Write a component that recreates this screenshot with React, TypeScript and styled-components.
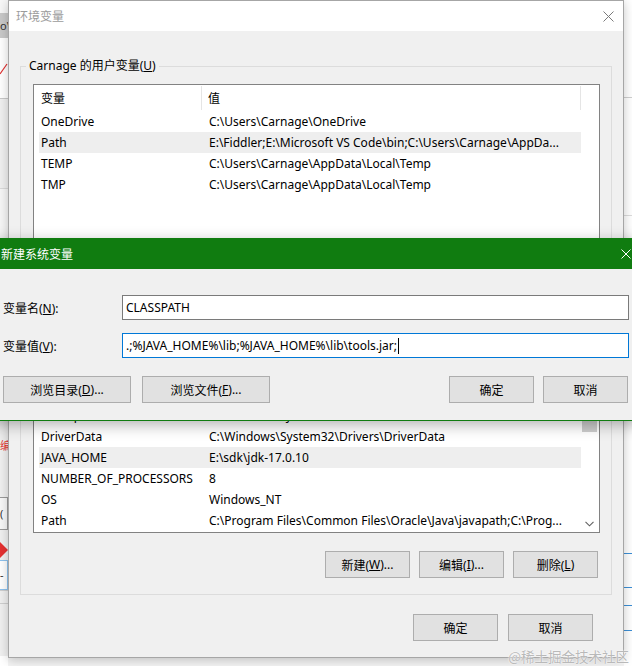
import React from "react";
import styled, { createGlobalStyle } from "styled-components";

const FONT = `"Noto Sans", "Noto Sans CJK SC", sans-serif`;

const Global = createGlobalStyle`
  html, body { margin: 0; padding: 0; }
  body { width: 632px; height: 666px; overflow: hidden; background: #fff; font-family: ${FONT}; font-size: 12px; }
  * { box-sizing: border-box; }
`;

const Desktop = styled.div`
  position: relative;
  width: 632px;
  height: 666px;
  overflow: hidden;
  background: #f4f4f4;
  font-family: ${FONT};
  font-size: 12px;
  color: #000;
`;

/* ---------- background fragments of other windows ---------- */
const Strip = styled.div<{ $left: number }>`
  position: absolute;
  top: 0;
  left: ${(p) => p.$left}px;
  width: 8px;
  height: 666px;
  display: flex;
  flex-direction: column;
  overflow: hidden;
  background: #fff;
`;
const Seg = styled.div<{ $h: number; $bg?: string; $line?: string; $color?: string; $box?: string }>`
  flex: 0 0 ${(p) => p.$h}px;
  background: ${(p) => p.$bg ?? "transparent"};
  ${(p) => (p.$line ? `border-top: 1px solid ${p.$line};` : "")}
  ${(p) => (p.$box ? `border: 1px solid ${p.$box}; border-left: none;` : "")}
  color: ${(p) => p.$color ?? "#333"};
  font-size: 11px;
  line-height: ${(p) => p.$h}px;
  overflow: hidden;
  white-space: nowrap;
  display: flex;
  align-items: center;
`;

/* ---------- window chrome ---------- */
const EnvWindow = styled.section`
  position: absolute;
  left: 8px;
  top: 0;
  width: 616px;
  height: 658px;
  display: flex;
  flex-direction: column;
  background: #f0f0f0;
  border: 1px solid #a6a6a6;
  box-shadow: 0 2px 10px rgba(0, 0, 0, 0.22);
`;
const TitleBar = styled.header<{ $active?: boolean }>`
  flex: 0 0 30px;
  display: flex;
  align-items: center;
  justify-content: space-between;
  padding: ${(p) => (p.$active ? "0 10px 0 10px" : "0 9px 0 7px")};
  background: ${(p) => (p.$active ? "#107c10" : "#ffffff")};
  color: ${(p) => (p.$active ? "#ffffff" : "#9b9b9b")};
  font-size: 12px;
`;
const WinBody = styled.div`
  flex: 1;
  min-height: 0;
  display: flex;
  flex-direction: column;
  padding: 27px 11px 16px 11px;
`;
const Group = styled.fieldset<{ $h?: number }>`
  margin: 0;
  padding: 10px 11px 16px 12px;
  border: 1px solid #dcdcdc;
  min-width: 0;
  display: flex;
  flex-direction: column;
  ${(p) => (p.$h ? `flex: 0 0 ${p.$h}px;` : "flex: 1 1 auto; min-height: 0;")}
  & + & {
    margin-top: 8px;
  }
`;
const Legend = styled.legend`
  margin-left: -7px;
  padding: 0 3px;
  line-height: 16px;
  font-size: 12px;
`;
const Key = styled.span`
  text-decoration: underline;
  text-underline-offset: 1px;
`;

/* ---------- list view ---------- */
const ListBox = styled.div`
  flex: 1 1 auto;
  min-height: 0;
  display: flex;
  border: 1px solid #828282;
  background: #fff;
  overflow: hidden;
`;
const ListMain = styled.div`
  flex: 1;
  min-width: 0;
  display: flex;
  flex-direction: column;
`;
const HeaderRow = styled.div`
  flex: 0 0 26px;
  display: flex;
`;
const HeaderCell = styled.div<{ $w: number; $pl: number }>`
  flex: 0 0 ${(p) => p.$w}px;
  padding-left: ${(p) => p.$pl}px;
  margin: 1px 0;
  display: flex;
  align-items: center;
  border-right: 1px solid #e5e5e5;
`;
const Rows = styled.div<{ $bottom?: boolean }>`
  flex: 1;
  min-height: 0;
  display: flex;
  flex-direction: column;
  overflow: hidden;
  justify-content: ${(p) => (p.$bottom ? "flex-end" : "flex-start")};
  padding-bottom: ${(p) => (p.$bottom ? 1 : 0)}px;
`;
const Row = styled.div<{ $sel?: boolean }>`
  flex: 0 0 21px;
  display: flex;
  align-items: center;
  margin-left: 5px;
  width: 542px;
  background: ${(p) => (p.$sel ? "#eeeeee" : "transparent")};
  white-space: nowrap;
`;
const NameCell = styled.span`
  flex: 0 0 163px;
  padding-left: 2px;
`;
const ValueCell = styled.span`
  flex: 1;
  min-width: 0;
  padding-left: 7px;
  overflow: hidden;
`;
const ScrollBar = styled.div`
  flex: 0 0 17px;
  display: flex;
  flex-direction: column;
  background: #fff;
`;
const ScrollArrow = styled.div`
  flex: 0 0 17px;
  display: flex;
  align-items: center;
  justify-content: center;
  padding-right: 2px;
`;
const ScrollTrack = styled.div`
  flex: 1;
  display: flex;
  flex-direction: column;
`;
const Thumb = styled.div<{ $top: number; $h: number }>`
  margin: ${(p) => p.$top}px 2px 0 0;
  height: ${(p) => p.$h}px;
  background: #cdcdcd;
`;

/* ---------- buttons ---------- */
const ButtonRow = styled.div<{ $mt: number; $mr: number; $gap: number }>`
  display: flex;
  justify-content: flex-end;
  gap: ${(p) => p.$gap}px;
  margin-top: ${(p) => p.$mt}px;
  margin-right: ${(p) => p.$mr}px;
`;
const Btn = styled.button<{ $w: number }>`
  width: ${(p) => p.$w}px;
  height: 27px;
  padding: 0;
  background: #e1e1e1;
  border: 1px solid #adadad;
  font-family: ${FONT};
  font-size: 12px;
  color: #000;
  display: inline-flex;
  align-items: center;
  justify-content: center;
`;

/* ---------- new variable dialog ---------- */
const Dialog = styled.section`
  position: absolute;
  left: -10px;
  top: 238px;
  width: 652px;
  display: flex;
  flex-direction: column;
  border: 1px solid #107c10;
  background: #f0f0f0;
  box-shadow: 0 4px 14px rgba(0, 0, 0, 0.3);
`;
const DialogBody = styled.div`
  display: flex;
  flex-direction: column;
  padding: 26px 12px 17px 12px;
`;
const FieldRow = styled.div`
  display: grid;
  grid-template-columns: 119px 1fr;
  align-items: center;
  & + & {
    margin-top: 13px;
  }
`;
const TextBox = styled.div<{ $focus?: boolean }>`
  height: 25px;
  border: 1px solid ${(p) => (p.$focus ? "#0078d7" : "#7a7a7a")};
  background: #fff;
  padding-left: 3px;
  display: flex;
  align-items: center;
  white-space: nowrap;
  overflow: hidden;
`;
const Caret = styled.span`
  display: inline-block;
  width: 1px;
  height: 16px;
  background: #000;
  margin-left: 1px;
`;
const DialogButtons = styled.div`
  display: flex;
  margin-top: 18px;
  gap: 11px;
  padding-right: 1px;
`;
const Spacer = styled.div`
  flex: 1;
`;
const OkPair = styled.div`
  display: flex;
  gap: 9px;
`;

const Watermark = styled.div`
  position: absolute;
  right: 3px;
  bottom: 2px;
  font-size: 13.5px;
  line-height: 16px;
  color: #b9b9b9;
  text-shadow: 0 0 1px #fff, 0 0 2px #fff;
  font-family: "Noto Sans CJK SC", sans-serif;
`;

const CloseIcon = ({ color, size }: { color: string; size: number }) => (
  <svg width={size} height={size} viewBox={`0 0 ${size} ${size}`}>
    <path d={`M0.5 0.5 L${size - 0.5} ${size - 0.5} M${size - 0.5} 0.5 L0.5 ${size - 0.5}`} stroke={color} strokeWidth="1" />
  </svg>
);

const userVars = [
  { n: "OneDrive", v: "C:\\Users\\Carnage\\OneDrive" },
  { n: "Path", v: "E:\\Fiddler;E:\\Microsoft VS Code\\bin;C:\\Users\\Carnage\\AppDa...", sel: true },
  { n: "TEMP", v: "C:\\Users\\Carnage\\AppData\\Local\\Temp" },
  { n: "TMP", v: "C:\\Users\\Carnage\\AppData\\Local\\Temp" },
];

const sysVars = [
  { n: "ComSpec", v: "C:\\Windows\\system32\\cmd.exe" },
  { n: "DriverData", v: "C:\\Windows\\System32\\Drivers\\DriverData" },
  { n: "JAVA_HOME", v: "E:\\sdk\\jdk-17.0.10", sel: true },
  { n: "NUMBER_OF_PROCESSORS", v: "8" },
  { n: "OS", v: "Windows_NT" },
  { n: "Path", v: "C:\\Program Files\\Common Files\\Oracle\\Java\\javapath;C:\\Prog..." },
];

export default function App() {
  return (
    <>
      <Global />
      <Desktop>
        <Strip $left={0}>
          <Seg $h={13} $bg="#f7f7f7" />
          <Seg $h={25} $bg="#c9c9c9">o\</Seg>
          <Seg $h={60} $bg="#ffffff">
            <svg width="8" height="20" viewBox="0 0 8 20">
              <path d="M0 16 L7 6" stroke="#e03030" strokeWidth="1.2" fill="none" />
            </svg>
          </Seg>
          <Seg $h={90} $bg="#f0f0f0" $line="#c8c8c8" />
          <Seg $h={50} $bg="#f7f7f7" $line="#dadada" />
          <Seg $h={183} $bg="#f0f0f0" />
          <Seg $h={16} $bg="#f0f0f0" />
          <Seg $h={18} $bg="#f0f0f0" $color="#e53935">编</Seg>
          <Seg $h={42} $bg="#f0f0f0" />
          <Seg $h={33} $bg="#f8f8f8" $box="#9a9a9a">(</Seg>
          <Seg $h={10} $bg="#f0f0f0" />
          <Seg $h={20} $bg="#f0f0f0">
            <svg width="8" height="20" viewBox="0 0 8 20">
              <path d="M0 2 L8 10 L0 18 Z" fill="#e53030" />
            </svg>
          </Seg>
          <Seg $h={30} $bg="#fff" $box="#8ec2ee">-</Seg>
          <Seg $h={13} $bg="#f0f0f0" $line="#cfcfcf" />
          <Seg $h={53} $bg="#f0f0f0" $line="#cfcfcf" />
        </Strip>
        <Strip $left={624}>
          <Seg $h={97} $bg="#ffffff" />
          <Seg $h={118} $bg="#ffffff" $line="#cfcfcf" />
          <Seg $h={338} $bg="#ffffff" $line="#dcdcdc" />
          <Seg $h={34} $bg="#ffffff" $line="#3c8fd6" />
          <Seg $h={18} $bg="#ffffff" $line="#3c8fd6" />
          <Seg $h={25} $bg="#ffffff" $line="#3c8fd6" />
          <Seg $h={36} $bg="#ffffff" $line="#3c8fd6" />
        </Strip>

        <EnvWindow>
          <TitleBar>
            <span>环境变量</span>
            <CloseIcon color="#7a7a7a" size={11} />
          </TitleBar>
          <WinBody>
            <Group $h={262}>
              <Legend>
                Carnage 的用户变量(<Key>U</Key>)
              </Legend>
              <ListBox>
                <ListMain>
                  <HeaderRow>
                    <HeaderCell $w={168} $pl={7}>变量</HeaderCell>
                    <HeaderCell $w={379} $pl={6}>值</HeaderCell>
                  </HeaderRow>
                  <Rows>
                    {userVars.map((r) => (
                      <Row key={r.n} $sel={r.sel}>
                        <NameCell>{r.n}</NameCell>
                        <ValueCell>{r.v}</ValueCell>
                      </Row>
                    ))}
                  </Rows>
                </ListMain>
              </ListBox>
              <ButtonRow $mt={14} $mr={2} $gap={9}>
                <Btn $w={85}>新建(<Key>N</Key>)...</Btn>
                <Btn $w={85}>编辑(<Key>E</Key>)...</Btn>
                <Btn $w={85}>删除(<Key>D</Key>)</Btn>
              </ButtonRow>
            </Group>
            <Group>
              <Legend>
                系统变量(<Key>S</Key>)
              </Legend>
              <ListBox>
                <ListMain>
                  <HeaderRow>
                    <HeaderCell $w={168} $pl={7}>变量</HeaderCell>
                    <HeaderCell $w={379} $pl={6}>值</HeaderCell>
                  </HeaderRow>
                  <Rows $bottom>
                    {sysVars.map((r) => (
                      <Row key={r.n} $sel={r.sel}>
                        <NameCell>{r.n}</NameCell>
                        <ValueCell>{r.v}</ValueCell>
                      </Row>
                    ))}
                  </Rows>
                </ListMain>
                <ScrollBar>
                  <ScrollArrow />
                  <ScrollTrack>
                    <Thumb $top={0} $h={60} />
                  </ScrollTrack>
                  <ScrollArrow>
                    <svg width="9" height="6" viewBox="0 0 9 6">
                      <path d="M0.5 0.8 L4.5 4.8 L8.5 0.8" stroke="#606060" strokeWidth="1.1" fill="none" />
                    </svg>
                  </ScrollArrow>
                </ScrollBar>
              </ListBox>
              <ButtonRow $mt={18} $mr={2} $gap={9}>
                <Btn $w={85}>新建(<Key>W</Key>)...</Btn>
                <Btn $w={85}>编辑(<Key>I</Key>)...</Btn>
                <Btn $w={85}>删除(<Key>L</Key>)</Btn>
              </ButtonRow>
            </Group>
            <ButtonRow $mt={19} $mr={19} $gap={10}>
              <Btn $w={85}>确定</Btn>
              <Btn $w={85}>取消</Btn>
            </ButtonRow>
          </WinBody>
        </EnvWindow>

        <Dialog>
          <TitleBar $active>
            <span>新建系统变量</span>
            <CloseIcon color="#ffffff" size={10} />
          </TitleBar>
          <DialogBody>
            <FieldRow>
              <span>
                变量名(<Key>N</Key>):
              </span>
              <TextBox>CLASSPATH</TextBox>
            </FieldRow>
            <FieldRow>
              <span>
                变量值(<Key>V</Key>):
              </span>
              <TextBox $focus>
                .;%JAVA_HOME%\lib;%JAVA_HOME%\lib\tools.jar;
                <Caret />
              </TextBox>
            </FieldRow>
            <DialogButtons>
              <Btn $w={128}>
                浏览目录(<Key>D</Key>)...
              </Btn>
              <Btn $w={128}>
                浏览文件(<Key>F</Key>)...
              </Btn>
              <Spacer />
              <OkPair>
                <Btn $w={85}>确定</Btn>
                <Btn $w={85}>取消</Btn>
              </OkPair>
            </DialogButtons>
          </DialogBody>
        </Dialog>

        <Watermark>@稀土掘金技术社区</Watermark>
      </Desktop>
    </>
  );
}
